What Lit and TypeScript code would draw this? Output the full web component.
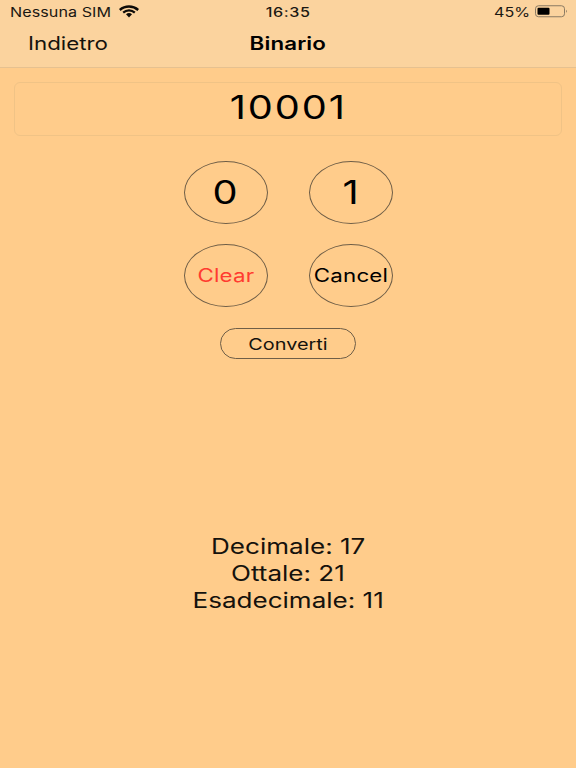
import { LitElement, html, css } from "lit";
import { customElement } from "lit/decorators.js";

@customElement("app-root")
export class AppRoot extends LitElement {
  static styles = css`
    :host {
      display: block;
      width: 576px;
      height: 768px;
      background: #ffcc8b;
      font-family: Inter, "Liberation Sans", sans-serif;
      color: #000;
      overflow: hidden;
    }
    .w {
      display: inline-block;
      transform: scaleX(1.24);
      white-space: nowrap;
    }
    .wl {
      transform-origin: left center;
    }
    .wr {
      transform-origin: right center;
    }
    .top {
      background: #fbd39e;
      border-bottom: 1px solid #e6c190;
      height: 67px;
      display: flex;
      flex-direction: column;
    }
    .status {
      height: 23px;
      display: grid;
      grid-template-columns: 1fr auto 1fr;
      align-items: center;
      font-size: 13px;
      letter-spacing: 0.05px;
      color: #1a1712;
      padding: 0 9px 0 10px;
    }
    .status-left {
      display: flex;
      align-items: center;
      gap: 26px;
    }
    .status-right {
      display: flex;
      justify-content: flex-end;
      align-items: center;
      gap: 4px;
    }
    .time {
      font-weight: 500;
      letter-spacing: 0.5px;
    }
    .nav {
      flex: 1;
      display: grid;
      grid-template-columns: 1fr auto 1fr;
      align-items: center;
      padding: 0 28px 3px;
    }
    .back {
      font-size: 18px;
      color: #15120d;
    }
    .title {
      font-size: 18px;
      font-weight: 600;
      letter-spacing: 0.1px;
    }
    .field {
      margin: 14px 14px 0;
      height: 54px;
      box-sizing: border-box;
      border: 1px solid #f0c386;
      border-radius: 6px;
      display: flex;
      align-items: center;
      justify-content: center;
      font-size: 32px;
      letter-spacing: 1.6px;
      padding-bottom: 3px;
    }
    .keys {
      margin-top: 25px;
      display: grid;
      grid-template-columns: 84px 84px;
      grid-auto-rows: 63px;
      column-gap: 41px;
      row-gap: 20px;
      justify-content: center;
    }
    .key {
      border: 1px solid #6f5e47;
      border-radius: 50%;
      box-sizing: border-box;
      display: flex;
      align-items: center;
      justify-content: center;
      white-space: nowrap;
    }
    .digit {
      font-size: 32px;
    }
    .word {
      font-size: 18px;
      letter-spacing: 0.15px;
    }
    .red {
      color: #ff3b30;
    }
    .convert-row {
      display: flex;
      justify-content: center;
      margin-top: 21px;
    }
    .convert {
      width: 136px;
      height: 31px;
      box-sizing: border-box;
      border: 1px solid #6f5e47;
      border-radius: 16px;
      display: flex;
      align-items: center;
      justify-content: center;
      font-size: 16px;
      color: #15120d;
    }
    .results {
      margin-top: 174px;
      text-align: center;
      font-size: 21px;
      line-height: 27px;
      color: #15120d;
    }
  `;

  render() {
    return html`
      <div class="top">
        <div class="status">
          <div class="status-left">
            <span class="w wl">Nessuna SIM</span>
            <svg width="22" height="14" viewBox="0 0 22 14">
              <path d="M11 12.6 L8 9.3 A4.6 4.6 0 0 1 14 9.3 Z" fill="#0d0b08" />
              <path d="M5.2 7.6 A8.6 8.6 0 0 1 16.8 7.6" fill="none" stroke="#0d0b08" stroke-width="2.2" />
              <path d="M1.8 5 A14 14 0 0 1 20.2 5" fill="none" stroke="#0d0b08" stroke-width="2.4" />
            </svg>
          </div>
          <span class="time w">16:35</span>
          <div class="status-right">
            <span class="w wr">45%</span>
            <svg width="33" height="14" viewBox="0 0 33 14">
              <rect x="1.5" y="0.75" width="29" height="11" rx="3" fill="none" stroke="#8a7a62" />
              <rect x="3.5" y="2.75" width="12" height="7" rx="1" fill="#000" />
              <path d="M32 4.75 a2 2 0 0 1 0 3 z" fill="#8a7a62" />
            </svg>
          </div>
        </div>
        <div class="nav">
          <span><span class="back w wl">Indietro</span></span>
          <span class="title w">Binario</span>
          <span></span>
        </div>
      </div>
      <div class="field"><span class="w">10001</span></div>
      <div class="keys">
        <div class="key digit"><span class="w">0</span></div>
        <div class="key digit"><span class="w">1</span></div>
        <div class="key word red"><span class="w">Clear</span></div>
        <div class="key word"><span class="w">Cancel</span></div>
      </div>
      <div class="convert-row"><div class="convert"><span class="w">Converti</span></div></div>
      <div class="results">
        <div><span class="w">Decimale: 17</span></div>
        <div><span class="w">Ottale: 21</span></div>
        <div><span class="w">Esadecimale: 11</span></div>
      </div>
    `;
  }
}
